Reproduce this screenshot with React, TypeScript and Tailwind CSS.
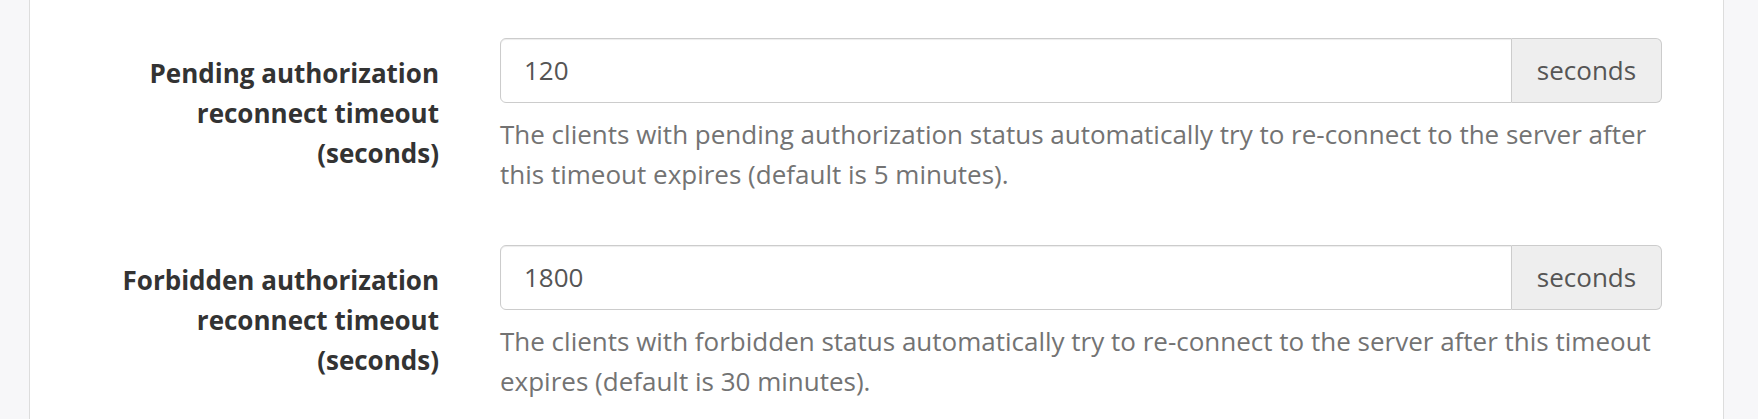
const rows = [
  {
    label: ['Pending authorization', 'reconnect timeout', '(seconds)'],
    value: '120',
    help: 'The clients with pending authorization status automatically try to re-connect to the server after this timeout expires (default is 5 minutes).',
  },
  {
    label: ['Forbidden authorization', 'reconnect timeout', '(seconds)'],
    value: '1800',
    help: 'The clients with forbidden status automatically try to re-connect to the server after this timeout expires (default is 30 minutes).',
  },
]

function TimeoutRow({ label, value, help }: (typeof rows)[number]) {
  return (
    <div className="flex items-start">
      <label className="w-[409px] shrink-0 pt-[15px] text-right text-[26px] font-bold leading-[40px] text-[#333]">
        {label.map((l) => (
          <div key={l}>{l}</div>
        ))}
      </label>
      <div className="ml-[61px] mr-[61px] flex-1">
        <div className="flex h-[65px]">
          <input
            type="text"
            defaultValue={value}
            className="min-w-0 flex-1 rounded-l-[6px] border border-[#ccc] bg-white px-[23px] text-[26px] text-[#555] shadow-[inset_0_1px_1px_rgba(0,0,0,0.075)] outline-none"
          />
          <span className="flex w-[150px] items-center justify-center rounded-r-[6px] border border-l-0 border-[#ccc] bg-[#eee] text-[26px] text-[#555]">
            seconds
          </span>
        </div>
        <p className="mt-[11px] text-[26px] leading-[40px] text-[#737373]">{help}</p>
      </div>
    </div>
  )
}

export default function App() {
  return (
    <div className="h-[419px] w-full overflow-hidden bg-[#f7f7f9] font-['Open_Sans',sans-serif]">
      <div className="ml-[29px] mr-[34px] h-full border-x border-[#ddd] bg-white pt-[38px]">
        <div className="flex flex-col gap-[51px]">
          {rows.map((r) => (
            <TimeoutRow key={r.value} {...r} />
          ))}
        </div>
      </div>
    </div>
  )
}
